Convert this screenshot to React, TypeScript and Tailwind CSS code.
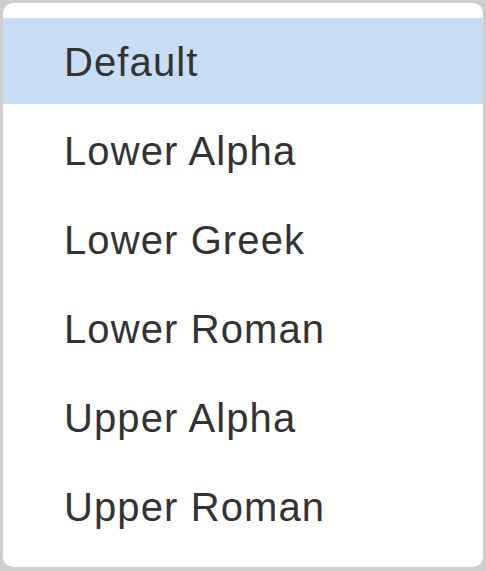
import React from "react";

const items = ["Default", "Lower Alpha", "Lower Greek", "Lower Roman", "Upper Alpha", "Upper Roman"];

export default function App() {
  return (
    <div className="w-[486px] h-[571px] bg-[#cecece] pt-[3px] pl-[3px] pr-[3px] pb-[4px]">
      <div className="h-full w-full bg-white rounded-[10px] pt-[15px] flex flex-col gap-[3px] overflow-hidden">
        {items.map((t, i) => (
          <div
            key={t}
            className={
              (i === 0 ? "bg-[#c7ddf3] " : "") +
              "h-[86px] shrink-0 flex items-center pl-[61px] pt-[2px] text-[40px] tracking-[1.1px] text-[#333333]"
            }
            style={{ fontFamily: '"Liberation Sans", Arial, sans-serif' }}
          >
            {t}
          </div>
        ))}
      </div>
    </div>
  );
}
